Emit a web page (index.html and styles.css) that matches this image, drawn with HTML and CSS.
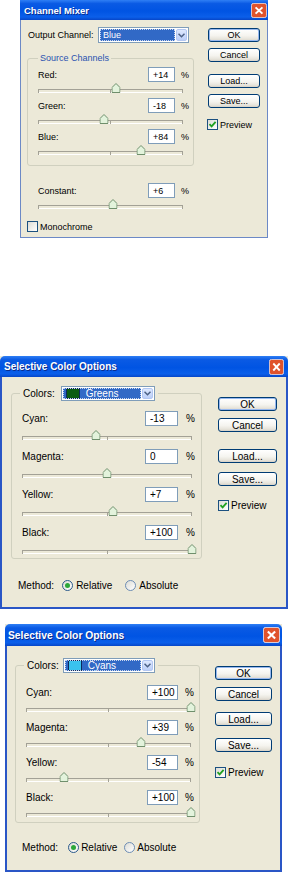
FILE: index.html
```html
<!DOCTYPE html>
<html lang="en">
  <head>
    <meta charset="UTF-8" />
    <title>Adjustment dialogs</title>
    <link rel="stylesheet" href="styles.css">
  </head>
  <body>
    <!-- Channel Mixer -->
    <div class="dlg mixer">
      <div class="titlebar">
        <span>Channel Mixer</span>
        <span class="close"><svg viewBox="0 0 21 21" preserveAspectRatio="none"><rect x="0.5" y="0.5" width="20" height="20" rx="3" fill="#e0532c" stroke="#fff"/><path d="M6 6L15 15M15 6L6 15" stroke="#fff" stroke-width="2.6"/></svg></span>
      </div>
      <div class="dlg-body">
        <div class="main">
          <div class="out-row">
            <span>Output Channel:</span>
            <div class="combo">
              <span class="combo-sel">Blue</span>
              <span class="combo-btn"><svg width="7" height="5" viewBox="0 0 7 5"><path d="M0.5 0.8L3.5 3.8L6.5 0.8" fill="none" stroke="#4d6185" stroke-width="1.5"/></svg></span>
            </div>
          </div>
          <fieldset class="group">
            <legend>Source Channels</legend>
            <div class="chan">
              <div class="chan-top"><span class="lbl">Red:</span><span class="num">+14</span><span class="pct">%</span></div>
              <div class="track"><span class="thumb" style="left:53.5%"><svg viewBox="0 0 9 10"><path d="M0.5 9.5V4.5L4.5 0.5L8.5 4.5V9.5Z" fill="#e3f3dc" stroke="#6f8f6c"/></svg></span></div>
            </div>
            <div class="chan">
              <div class="chan-top"><span class="lbl">Green:</span><span class="num">-18</span><span class="pct">%</span></div>
              <div class="track"><span class="thumb" style="left:45.5%"><svg viewBox="0 0 9 10"><path d="M0.5 9.5V4.5L4.5 0.5L8.5 4.5V9.5Z" fill="#e3f3dc" stroke="#6f8f6c"/></svg></span></div>
            </div>
            <div class="chan">
              <div class="chan-top"><span class="lbl">Blue:</span><span class="num">+84</span><span class="pct">%</span></div>
              <div class="track"><span class="thumb" style="left:71%"><svg viewBox="0 0 9 10"><path d="M0.5 9.5V4.5L4.5 0.5L8.5 4.5V9.5Z" fill="#e3f3dc" stroke="#6f8f6c"/></svg></span></div>
            </div>
          </fieldset>
          <div class="chan constant">
            <div class="chan-top"><span class="lbl">Constant:</span><span class="num">+6</span><span class="pct">%</span></div>
            <div class="track"><span class="thumb" style="left:51.5%"><svg viewBox="0 0 9 10"><path d="M0.5 9.5V4.5L4.5 0.5L8.5 4.5V9.5Z" fill="#e3f3dc" stroke="#6f8f6c"/></svg></span></div>
          </div>
          <div class="check mono"><span class="box"></span>Monochrome</div>
        </div>
        <div class="side">
          <span class="btn default">OK</span>
          <span class="btn cancel">Cancel</span>
          <span class="btn load">Load...</span>
          <span class="btn save">Save...</span>
          <div class="check preview"><span class="box"><svg viewBox="0 0 9 9"><path d="M1.5 4.2L3.6 6.4L7.6 1.8" fill="none" stroke="#21a121" stroke-width="1.8"/></svg></span>Preview</div>
        </div>
      </div>
    </div>

    <!-- Selective Color: Greens -->
    <div class="dlg sel greens">
      <div class="titlebar">
        <span>Selective Color Options</span>
        <span class="close"><svg viewBox="0 0 21 21" preserveAspectRatio="none"><rect x="0.5" y="0.5" width="20" height="20" rx="3" fill="#e0532c" stroke="#fff"/><path d="M6 6L15 15M15 6L6 15" stroke="#fff" stroke-width="2.6"/></svg></span>
      </div>
      <div class="dlg-body">
        <div class="main">
          <fieldset class="group">
            <legend><span class="legend-row">Colors:
              <span class="combo">
                <span class="combo-sel"><span class="swatch green"></span>Greens</span>
                <span class="combo-btn"><svg width="7" height="5" viewBox="0 0 7 5"><path d="M0.5 0.8L3.5 3.8L6.5 0.8" fill="none" stroke="#4d6185" stroke-width="1.5"/></svg></span>
              </span></span></legend>
            <div class="chan">
              <div class="chan-top"><span class="lbl">Cyan:</span><span class="num">-13</span><span class="pct">%</span></div>
              <div class="track"><span class="thumb" style="left:43.5%"><svg viewBox="0 0 9 10"><path d="M0.5 9.5V4.5L4.5 0.5L8.5 4.5V9.5Z" fill="#e3f3dc" stroke="#6f8f6c"/></svg></span></div>
            </div>
            <div class="chan">
              <div class="chan-top"><span class="lbl">Magenta:</span><span class="num">0</span><span class="pct">%</span></div>
              <div class="track"><span class="thumb" style="left:50%"><svg viewBox="0 0 9 10"><path d="M0.5 9.5V4.5L4.5 0.5L8.5 4.5V9.5Z" fill="#e3f3dc" stroke="#6f8f6c"/></svg></span></div>
            </div>
            <div class="chan">
              <div class="chan-top"><span class="lbl">Yellow:</span><span class="num">+7</span><span class="pct">%</span></div>
              <div class="track"><span class="thumb" style="left:53.5%"><svg viewBox="0 0 9 10"><path d="M0.5 9.5V4.5L4.5 0.5L8.5 4.5V9.5Z" fill="#e3f3dc" stroke="#6f8f6c"/></svg></span></div>
            </div>
            <div class="chan">
              <div class="chan-top"><span class="lbl">Black:</span><span class="num">+100</span><span class="pct">%</span></div>
              <div class="track"><span class="thumb" style="left:100%"><svg viewBox="0 0 9 10"><path d="M0.5 9.5V4.5L4.5 0.5L8.5 4.5V9.5Z" fill="#e3f3dc" stroke="#6f8f6c"/></svg></span></div>
            </div>
          </fieldset>
          <div class="method">
            <span>Method:</span>
            <span class="radio on"></span><span class="r-lbl">Relative</span>
            <span class="radio second"></span><span class="r-lbl">Absolute</span>
          </div>
        </div>
        <div class="side">
          <span class="btn default">OK</span>
          <span class="btn cancel">Cancel</span>
          <span class="btn load">Load...</span>
          <span class="btn save">Save...</span>
          <div class="check preview"><span class="box"><svg viewBox="0 0 9 9"><path d="M1.5 4.2L3.6 6.4L7.6 1.8" fill="none" stroke="#21a121" stroke-width="1.8"/></svg></span>Preview</div>
        </div>
      </div>
    </div>

    <!-- Selective Color: Cyans -->
    <div class="dlg sel cyans">
      <div class="titlebar">
        <span>Selective Color Options</span>
        <span class="close"><svg viewBox="0 0 21 21" preserveAspectRatio="none"><rect x="0.5" y="0.5" width="20" height="20" rx="3" fill="#e0532c" stroke="#fff"/><path d="M6 6L15 15M15 6L6 15" stroke="#fff" stroke-width="2.6"/></svg></span>
      </div>
      <div class="dlg-body">
        <div class="main">
          <fieldset class="group">
            <legend><span class="legend-row">Colors:
              <span class="combo">
                <span class="combo-sel"><span class="swatch cyan"></span>Cyans</span>
                <span class="combo-btn"><svg width="7" height="5" viewBox="0 0 7 5"><path d="M0.5 0.8L3.5 3.8L6.5 0.8" fill="none" stroke="#4d6185" stroke-width="1.5"/></svg></span>
              </span></span></legend>
            <div class="chan">
              <div class="chan-top"><span class="lbl">Cyan:</span><span class="num">+100</span><span class="pct">%</span></div>
              <div class="track"><span class="thumb" style="left:100%"><svg viewBox="0 0 9 10"><path d="M0.5 9.5V4.5L4.5 0.5L8.5 4.5V9.5Z" fill="#e3f3dc" stroke="#6f8f6c"/></svg></span></div>
            </div>
            <div class="chan">
              <div class="chan-top"><span class="lbl">Magenta:</span><span class="num">+39</span><span class="pct">%</span></div>
              <div class="track"><span class="thumb" style="left:69.5%"><svg viewBox="0 0 9 10"><path d="M0.5 9.5V4.5L4.5 0.5L8.5 4.5V9.5Z" fill="#e3f3dc" stroke="#6f8f6c"/></svg></span></div>
            </div>
            <div class="chan">
              <div class="chan-top"><span class="lbl">Yellow:</span><span class="num">-54</span><span class="pct">%</span></div>
              <div class="track"><span class="thumb" style="left:23%"><svg viewBox="0 0 9 10"><path d="M0.5 9.5V4.5L4.5 0.5L8.5 4.5V9.5Z" fill="#e3f3dc" stroke="#6f8f6c"/></svg></span></div>
            </div>
            <div class="chan">
              <div class="chan-top"><span class="lbl">Black:</span><span class="num">+100</span><span class="pct">%</span></div>
              <div class="track"><span class="thumb" style="left:100%"><svg viewBox="0 0 9 10"><path d="M0.5 9.5V4.5L4.5 0.5L8.5 4.5V9.5Z" fill="#e3f3dc" stroke="#6f8f6c"/></svg></span></div>
            </div>
          </fieldset>
          <div class="method">
            <span>Method:</span>
            <span class="radio on"></span><span class="r-lbl">Relative</span>
            <span class="radio second"></span><span class="r-lbl">Absolute</span>
          </div>
        </div>
        <div class="side">
          <span class="btn default">OK</span>
          <span class="btn cancel">Cancel</span>
          <span class="btn load">Load...</span>
          <span class="btn save">Save...</span>
          <div class="check preview"><span class="box"><svg viewBox="0 0 9 9"><path d="M1.5 4.2L3.6 6.4L7.6 1.8" fill="none" stroke="#21a121" stroke-width="1.8"/></svg></span>Preview</div>
        </div>
      </div>
    </div>
  </body>
</html>
```

FILE: styles.css
```css
* {
  box-sizing: border-box;
}
body {
  margin: 0;
  padding: 0;
  width: 288px;
  background-color: #fff;
  font-family: "Liberation Sans", Arial, sans-serif;
  color: #000;
}
.dlg {
  background-color: #ece9d8;
}
.titlebar {
  display: flex;
  align-items: center;
  justify-content: space-between;
  color: #fff;
  font-weight: bold;
  background: linear-gradient(#2f7ff5, #0a5ae4 18%, #0054e3 55%, #0b5fea 85%, #0646c8);
  text-shadow: 1px 1px 0 #0b2c8c;
}
.close {
  display: block;
}
.close svg {
  display: block;
  width: 100%;
  height: 100%;
}
.dlg-body {
  display: flex;
  border: solid #2a56c6;
  border-width: 0 2px 2px;
}
.main,
.side {
  display: flex;
  flex-direction: column;
}

/* combo box */
.combo {
  display: flex;
  height: 15px;
  padding: 1px;
  border: 1px solid #7f9db9;
  background-color: #fff;
}
.combo-sel {
  flex: 1;
  display: flex;
  align-items: center;
  padding-left: 3px;
  color: #fff;
  background-color: #3169c6;
  outline: 1px dotted #c9d6ee;
  outline-offset: -1px;
}
.combo-btn {
  width: 11px;
  display: flex;
  align-items: center;
  justify-content: center;
  margin-left: 1px;
  background: linear-gradient(#dde8fe, #bccff8);
  border: 1px solid #b3c7f2;
  border-radius: 2px;
}
.combo-btn svg {
  display: block;
}
.swatch {
  width: 14px;
  height: 11px;
  margin-right: 6px;
  border: 1px solid #0d2a5c;
}
.swatch.green {
  background-color: #0b5c12;
}
.swatch.cyan {
  background-color: #39c3ef;
}

/* group box */
.group {
  margin: 0;
  border: 1px solid #d0d0bf;
  border-radius: 3px;
  min-width: 0;
}
.group legend {
  padding: 0 3px;
}
.legend-row {
  display: flex;
  align-items: center;
  height: 15px;
}

/* slider rows */
.chan-top {
  display: flex;
  align-items: center;
  height: 15px;
}
.lbl {
  flex: 1;
}
.num {
  height: 15px;
  display: flex;
  align-items: center;
  padding-left: 4px;
  border: 1px solid #7f9db9;
  background-color: #fff;
}
.pct {
  width: 7px;
}
.track {
  position: relative;
}
.track::before {
  content: "";
  position: absolute;
  left: 0;
  right: 0;
  top: var(--line);
  height: 2px;
  border-top: 1px solid #a3a196;
  border-bottom: 1px solid #fff;
}
.track::after {
  content: "";
  position: absolute;
  left: 0;
  right: 0;
  top: calc(var(--line) + 1px);
  height: 3px;
  background: linear-gradient(#a3a196, #a3a196) 0 0 / 1px 100% no-repeat,
    linear-gradient(#a3a196, #a3a196) 50% 0 / 1px 100% no-repeat,
    linear-gradient(#a3a196, #a3a196) 100% 0 / 1px 100% no-repeat;
}
.thumb {
  position: absolute;
  z-index: 1;
  top: calc(var(--line) - 6px);
  width: 9px;
  height: 10px;
  transform: translateX(-50%);
}
.thumb svg {
  display: block;
  width: 9px;
  height: 10px;
}

/* buttons, checks, radios */
.btn {
  display: flex;
  align-items: center;
  justify-content: center;
  height: 14px;
  border: 1px solid #003c74;
  border-radius: 3px;
  background: linear-gradient(#fff, #f5f4ef 55%, #e6e3da 85%, #d6d0c5);
}
.btn.default {
  box-shadow: inset 0 0 0 1px #97b8ef;
}
.check {
  display: flex;
  align-items: center;
  gap: 2px;
}
.box {
  width: 11px;
  height: 11px;
  border: 1px solid #1c5180;
  background: linear-gradient(135deg, #dcdcd5, #fff);
}
.box svg {
  display: block;
  width: 9px;
  height: 9px;
}
.method {
  display: flex;
  align-items: center;
  height: 14px;
}
.radio {
  position: relative;
  width: 11px;
  height: 11px;
  border: 1px solid #2b5a8c;
  border-radius: 50%;
  background: linear-gradient(135deg, #dcdcd5, #fff);
}
.radio.second {
  border-color: #6d8db5;
}
.radio.on::after {
  content: "";
  position: absolute;
  left: 2px;
  top: 2px;
  width: 5px;
  height: 5px;
  border-radius: 50%;
  background-color: #2ba73a;
}

/* Channel Mixer */
.mixer {
  margin-left: 20px;
  width: 248px;
  font-size: 9px;
}
.mixer .titlebar {
  height: 20px;
  padding: 0 1px 0 4px;
  font-size: 9.5px;
}
.mixer .close {
  width: 16px;
  height: 15px;
}
.mixer .dlg-body {
  height: 218px;
  border-width: 0 1px 1px;
  border-color: #6c89c6;
}
.mixer .main {
  width: 173px;
  padding-left: 6px;
}
.mixer .out-row {
  display: flex;
  align-items: center;
  height: 16px;
  margin-top: 7px;
  padding-left: 1px;
}
.mixer .out-row .combo {
  width: 91px;
  height: 16px;
  margin-left: auto;
  margin-right: 5px;
}
.mixer .group {
  margin-top: 9px;
  padding: 3px 5px 5px 10px;
}
.mixer .group legend {
  padding: 0 2px;
  line-height: 12px;
  color: #2a52b0;
}
.mixer .chan {
  --line: 7px;
}
.mixer .num {
  width: 27px;
}
.mixer .pct {
  margin-left: 6px;
}
.mixer .track {
  width: 145px;
  height: 16px;
}
.mixer .constant {
  margin-top: 17px;
  padding: 0 6px 0 11px;
}
.mixer .mono {
  margin-top: 7px;
}
.mixer .side {
  width: 73px;
  padding-top: 8px;
  padding-left: 14px;
}
.mixer .btn {
  width: 52px;
}
.mixer .cancel,
.mixer .save {
  margin-top: 6px;
}
.mixer .load {
  margin-top: 12px;
}
.mixer .preview {
  margin-top: 11px;
  margin-left: -1px;
}

/* Selective Color */
.sel {
  font-size: 10px;
}
.sel .titlebar {
  border-radius: 5px 5px 0 0;
  font-size: 10px;
}
.sel .legend-row .combo {
  margin-left: 6px;
}
.sel .chan + .chan {
  margin-top: var(--gap);
}
.sel .method span:first-child {
  margin-right: var(--m1);
}
.sel .r-lbl {
  margin-left: var(--m2);
}
.sel .radio.second {
  margin-left: var(--m3);
}

.greens {
  width: 288px;
  margin-top: 118px;
  --line: 10px;
  --gap: 5px;
  --m1: 8px;
  --m2: 3px;
  --m3: 13px;
}
.greens .titlebar {
  height: 21px;
  padding: 0 4px;
}
.greens .close {
  width: 15px;
  height: 16px;
}
.greens .dlg-body {
  height: 232px;
}
.greens .main {
  width: 200px;
  padding-left: 9px;
}
.greens .group {
  margin-top: 9px;
  padding: 10px 8px 0 10px;
}
.greens .group legend {
  margin-left: -2px;
}
.greens .legend-row .combo {
  width: 94px;
}
.greens .num {
  width: 33px;
}
.greens .pct {
  margin-left: 8px;
}
.greens .track {
  width: 170px;
  height: 18px;
}
.greens .method {
  margin-top: 19px;
  padding-left: 7px;
}
.greens .side {
  padding-top: 20px;
  padding-left: 16px;
}
.greens .btn {
  width: 59px;
}
.greens .cancel {
  margin-top: 7px;
}
.greens .load {
  margin-top: 17px;
}
.greens .save {
  margin-top: 9px;
}
.greens .preview {
  margin-top: 14px;
}

.cyans {
  width: 277px;
  margin-top: 15px;
  margin-left: 5px;
  --line: 8px;
  --gap: 4px;
  --m1: 10px;
  --m2: 2px;
  --m3: 7px;
}
.cyans .titlebar {
  height: 22px;
  padding: 0 2px 0 3px;
  font-size: 10.3px;
}
.cyans .close {
  width: 17px;
  height: 16px;
}
.cyans .dlg-body {
  height: 226px;
}
.cyans .main {
  width: 193px;
  padding-left: 8px;
}
.cyans .group {
  margin-top: 12px;
  padding: 12px 7px 1px 10px;
}
.cyans .group legend {
  margin-left: -2px;
}
.cyans .legend-row .combo {
  width: 92px;
  margin-left: 4px;
}
.cyans .num {
  width: 31px;
}
.cyans .pct {
  margin-left: 7px;
}
.cyans .track {
  width: 165px;
  height: 16px;
}
.cyans .method {
  margin-top: 17px;
  padding-left: 7px;
}
.cyans .side {
  padding-top: 20px;
  padding-left: 15px;
}
.cyans .btn {
  width: 57px;
}
.cyans .cancel {
  margin-top: 7px;
}
.cyans .load {
  margin-top: 11px;
}
.cyans .save {
  margin-top: 12px;
}
.cyans .preview {
  margin-top: 15px;
}
```
